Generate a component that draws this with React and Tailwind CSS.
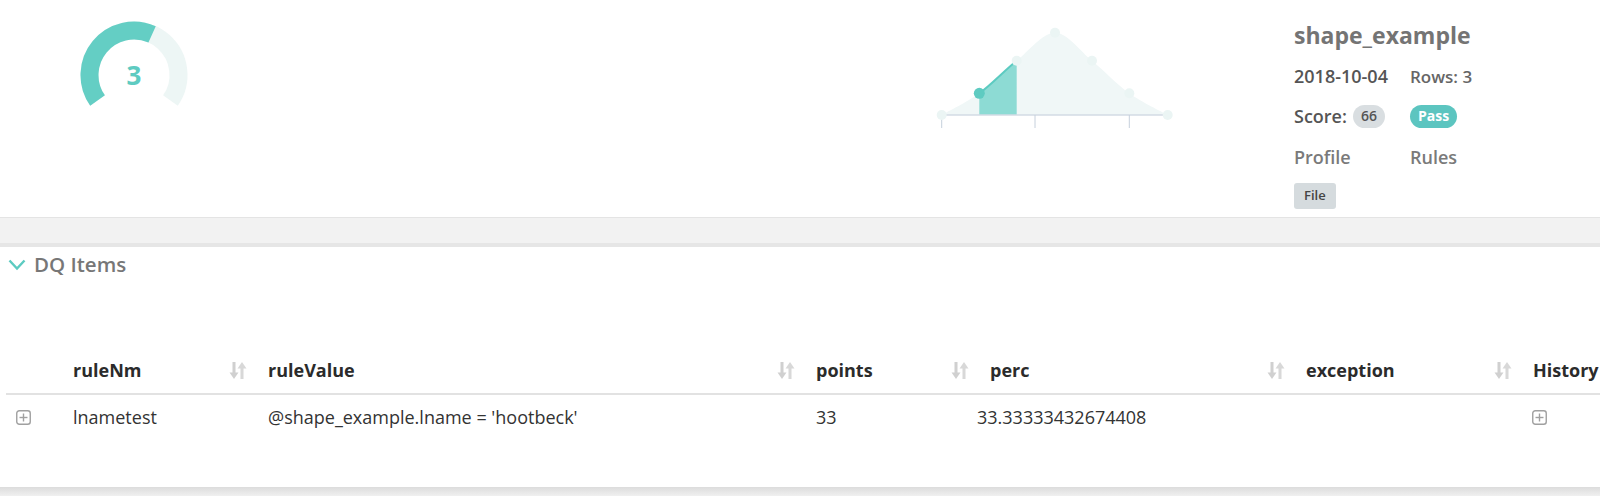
import React from 'react';

// ─────────────────────────────────────────────
//  Helpers for the two small drawings
// ─────────────────────────────────────────────
const polar = (cx, cy, r, deg) => {
  const a = (deg * Math.PI) / 180;
  return [cx + r * Math.sin(a), cy - r * Math.cos(a)];
};

const arc = (cx, cy, r, from, to) => {
  const [x1, y1] = polar(cx, cy, r, from);
  const [x2, y2] = polar(cx, cy, r, to);
  const large = to - from > 180 ? 1 : 0;
  return `M${x1},${y1} A${r},${r} 0 ${large} 1 ${x2},${y2}`;
};

const pts = [
  [11.7, 95],
  [49.3, 73.3],
  [86.7, 40.7],
  [125, 12.7],
  [162, 40.7],
  [199.3, 73.3],
  [237.7, 95],
];

// catmull-rom segment -> cubic bezier
const seg = (i) => {
  const p0 = pts[Math.max(0, i - 1)];
  const p1 = pts[i];
  const p2 = pts[i + 1];
  const p3 = pts[Math.min(pts.length - 1, i + 2)];
  const c1 = [p1[0] + (p2[0] - p0[0]) / 6, p1[1] + (p2[1] - p0[1]) / 6];
  const c2 = [p2[0] - (p3[0] - p1[0]) / 6, p2[1] - (p3[1] - p1[1]) / 6];
  return `C${c1[0]},${c1[1]} ${c2[0]},${c2[1]} ${p2[0]},${p2[1]}`;
};

const curve = pts.slice(0, -1).map((_, i) => seg(i)).join(' ');

const Gauge = () => (
  <svg width="112" height="100" viewBox="0 0 112 100">
    <path d={arc(56, 56, 44.5, -125, 125)} fill="none" stroke="#edf6f5" strokeWidth="18" />
    <path d={arc(56, 56, 44.5, -125, 24)} fill="none" stroke="#64cec4" strokeWidth="18" />
    <text x="56" y="65.5" textAnchor="middle" fontSize="26" fontWeight="700" fill="#5ecbc1" fontFamily="Open Sans, sans-serif">
      3
    </text>
  </svg>
);

const Bell = () => (
  <svg width="250" height="110" viewBox="0 0 250 110">
    <path d={`M${pts[0][0]},${pts[0][1]} ${curve} L${pts[0][0]},95 Z`} fill="#f0f7f7" />
    <path d={`M49.3,95 L49.3,73.3 ${seg(1)} L86.7,95 Z`} fill="#8ddbd4" />
    <path d={`M49.3,73.3 ${seg(1)}`} fill="none" stroke="#5ccbc1" strokeWidth="2" />
    <line x1="11.7" y1="95" x2="237.7" y2="95" stroke="#d3dbe5" strokeWidth="1.5" />
    {[11.7, 105, 199.3].map((x) => (
      <line key={x} x1={x} y1="95" x2={x} y2="108" stroke="#c6d0dc" strokeWidth="1" />
    ))}
    {pts.map(([x, y], i) =>
      i === 1 ? null : <circle key={i} cx={x} cy={y} r="5" fill="#ebf5f4" />
    )}
    <circle cx="49.3" cy="73.3" r="5.5" fill="#5ecbc1" />
  </svg>
);

const SortIcon = () => (
  <svg width="18" height="19" viewBox="0 0 18 19" className="shrink-0">
    <rect x="3.5" y="1" width="3" height="12" fill="#d0d0d0" />
    <path d="M0.5 11.5 L5 18 L9.5 11.5 Z" fill="#d0d0d0" />
    <rect x="11.5" y="6" width="3" height="12" fill="#d8d8d8" />
    <path d="M8.5 7.5 L13 1 L17.5 7.5 Z" fill="#d8d8d8" />
  </svg>
);

const PlusBox = () => (
  <svg width="15" height="15" viewBox="0 0 15 15" className="shrink-0">
    <rect x="0.75" y="0.75" width="13.5" height="13.5" rx="2.5" fill="none" stroke="#a0a0a0" strokeWidth="1.4" />
    <line x1="7.5" y1="3.5" x2="7.5" y2="11.5" stroke="#a0a0a0" strokeWidth="1.4" />
    <line x1="3.5" y1="7.5" x2="11.5" y2="7.5" stroke="#a0a0a0" strokeWidth="1.4" />
  </svg>
);

const columns = [
  { label: 'ruleNm', w: 'w-[195px]' },
  { label: 'ruleValue', w: 'w-[548px]' },
  { label: 'points', w: 'w-[174px]' },
  { label: 'perc', w: 'w-[316px]' },
  { label: 'exception', w: 'w-[227px]' },
];

const App = () => {
  return (
    <div className="w-[1600px] h-[496px] overflow-hidden bg-white font-['Open_Sans',sans-serif]">
      {/* Summary */}
      <div className="flex items-start h-[217px]">
        <div className="ml-[78px] mt-[19px]">
          <Gauge />
        </div>
        <div className="ml-[740px] mt-[20px]">
          <Bell />
        </div>
        <div className="ml-[114px] pt-[20px] flex flex-col">
          <div className="h-[30px] flex items-center text-[23px] leading-none font-bold text-[#747474]">
            shape_example
          </div>
          <div className="grid grid-cols-[116px_auto] mt-[6px]">
            <div className="h-[40px] flex items-center text-[18px] leading-none font-semibold text-[#555]">2018-10-04</div>
            <div className="h-[40px] flex items-center text-[17px] leading-none font-semibold text-[#666]">Rows: 3</div>
            <div className="h-[40px] flex items-center gap-[6px] text-[18px] leading-none font-semibold text-[#555]">
              Score:
              <span className="h-[23px] px-[8px] rounded-full bg-[#d9dee1] text-[14px] text-[#555] flex items-center">66</span>
            </div>
            <div className="h-[40px] flex items-center">
              <span className="h-[23px] px-[8px] rounded-full bg-[#5cc5c0] text-[14px] font-bold text-white flex items-center leading-none">
                Pass
              </span>
            </div>
            <div className="h-[42px] flex items-center text-[18px] leading-none font-semibold text-[#7a7a7a]">Profile</div>
            <div className="h-[42px] flex items-center text-[18px] leading-none font-semibold text-[#7a7a7a]">Rules</div>
          </div>
          <div className="mt-[5px] self-start h-[26px] px-[10px] rounded-[3px] bg-[#d5dbde] text-[13px] font-semibold text-[#444] flex items-center">
            File
          </div>
        </div>
      </div>

      {/* Divider band */}
      <div className="border-t border-[#e4e4e4] bg-[#f2f2f2] h-[25px] border-b-4 border-b-[#e6e6e6] box-content" />

      {/* DQ Items card */}
      <div className="h-[240px] pt-[6px]">
        <div className="h-[23px] flex items-center pl-[8px] gap-[8px]">
          <svg width="18" height="12" viewBox="0 0 18 12">
            <polyline points="1.5,1.5 9,9.5 16.5,1.5" fill="none" stroke="#5ccbc1" strokeWidth="2.4" />
          </svg>
          <span className="text-[20.5px] leading-none font-semibold text-[#777]">DQ Items</span>
        </div>

        <div className="ml-[6px] mt-[71px] text-[18px] text-[#333]">
          <div className="flex h-[46px] border-b-2 border-[#e2e2e2] box-content">
            <div className="w-[54px]" />
            {columns.map((c) => (
              <div key={c.label} className={`${c.w} flex items-center justify-between pl-[13px] pr-[8px]`}>
                <span className="font-bold leading-none text-[#2b2b2b]">{c.label}</span>
                <SortIcon />
              </div>
            ))}
            <div className="flex-1 flex items-center pl-[13px] font-bold leading-none text-[#2b2b2b] whitespace-nowrap">
              History
            </div>
          </div>
          <div className="flex h-[44px]">
            <div className="w-[54px] flex items-center pl-[10px]">
              <PlusBox />
            </div>
            <div className="w-[195px] flex items-center pl-[13px] leading-none">lnametest</div>
            <div className="w-[548px] flex items-center pl-[13px] leading-none">@shape_example.lname = 'hootbeck'</div>
            <div className="w-[174px] flex items-center pl-[13px] leading-none">33</div>
            <div className="w-[316px] flex items-center leading-none">33.33333432674408</div>
            <div className="w-[227px]" />
            <div className="flex-1 flex items-center pl-[12px]">
              <PlusBox />
            </div>
          </div>
        </div>
      </div>
      <div className="h-[9px] bg-gradient-to-b from-[#dcdcdc] to-[#f0f0f0]" />
    </div>
  );
};

export default App;
